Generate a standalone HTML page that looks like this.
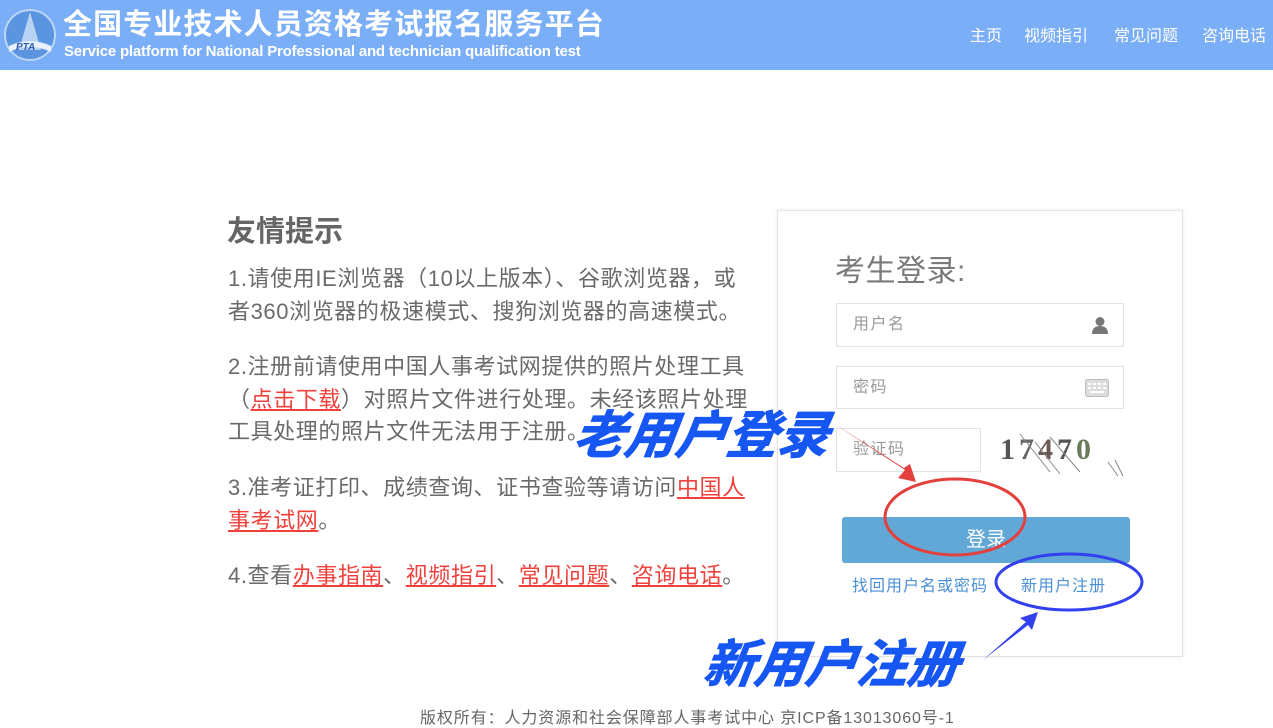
<!DOCTYPE html>
<html><head><meta charset="utf-8">
<style>
*{margin:0;padding:0;box-sizing:border-box}
body{width:1273px;height:727px;overflow:hidden;background:#fff;font-family:"Liberation Sans","Noto Sans CJK SC",sans-serif;position:relative}
.hd{position:absolute;left:0;top:0;width:1273px;height:70px;background:#7aaef6}
.t1{position:absolute;left:63px;top:1px;font-size:29px;font-weight:bold;color:#fff;letter-spacing:1.1px;white-space:nowrap}
.t2{position:absolute;left:64px;top:43px;font-size:15px;font-weight:bold;color:#fff;white-space:nowrap;letter-spacing:-0.2px}
.nav{position:absolute;top:22px;font-size:16px;color:#fff;white-space:nowrap}
.ab{position:absolute;white-space:nowrap}
.p{position:absolute;left:228px;font-size:22px;letter-spacing:0.6px;color:#6a6a6a;line-height:32.5px;white-space:nowrap}
.r{color:#f0413c;text-decoration:underline}
.box{position:absolute;left:777px;top:210px;width:406px;height:447px;border:1px solid #e4e4e4;box-shadow:0 0 4px rgba(0,0,0,0.08)}
.in{position:absolute;border:1px solid #e2e2e2;background:#fff;font-size:16px;letter-spacing:1.5px;color:#999;padding-left:16px}
.btn{position:absolute;left:842px;top:517px;width:288px;height:46px;background:#62a8d6;border-radius:3px;color:#fff;font-size:20px;text-align:center;line-height:46px}
.lk{position:absolute;top:572px;font-size:16px;letter-spacing:1px;color:#4b8fd6}
.big{position:absolute;font-size:51px;font-weight:bold;font-style:italic;color:#1656f2;white-space:nowrap;transform:skewX(-8deg);-webkit-text-stroke:1px #1656f2}
</style></head><body>
<div class="hd">
<svg style="position:absolute;left:3px;top:6px" width="54" height="56" viewBox="0 0 54 56">
<circle cx="27" cy="29" r="25" fill="#5b95e0" stroke="#bcd6f7" stroke-width="2"/>
<path d="M27 6 L16 44 L38 44 Z" fill="#cfe1f8" opacity="0.8"/>
<path d="M6 40 Q27 30 48 40 L48 46 Q27 36 6 46Z" fill="#e8f1fc"/>
<text x="13" y="44" font-size="10" font-weight="bold" font-style="italic" fill="#2d5fb0" font-family="Liberation Sans">PTA</text>
</svg>
<div class="t1">全国专业技术人员资格考试报名服务平台</div>
<div class="t2">Service platform for National Professional and technician qualification test</div>
<div class="nav" style="left:970px">主页</div>
<div class="nav" style="left:1024px">视频指引</div>
<div class="nav" style="left:1114px">常见问题</div>
<div class="nav" style="left:1202px">咨询电话</div>
</div>

<div class="ab" style="left:227px;top:208px;font-size:29px;font-weight:bold;color:#666">友情提示</div>
<div class="p" style="top:263px">1.请使用IE浏览器（10以上版本）、谷歌浏览器，或<br>者360浏览器的极速模式、搜狗浏览器的高速模式。</div>
<div class="p" style="top:351px">2.注册前请使用中国人事考试网提供的照片处理工具<br>（<span class="r">点击下载</span>）对照片文件进行处理。未经该照片处理<br>工具处理的照片文件无法用于注册。</div>
<div class="p" style="top:472px">3.准考证打印、成绩查询、证书查验等请访问<span class="r">中国人</span><br><span class="r">事考试网</span>。</div>
<div class="p" style="top:560px">4.查看<span class="r">办事指南</span>、<span class="r">视频指引</span>、<span class="r">常见问题</span>、<span class="r">咨询电话</span>。</div>

<div class="box"></div>
<div class="ab" style="left:835px;top:246px;font-size:30px;color:#7a7a7a;letter-spacing:0.5px">考生登录:</div>
<div class="in" style="left:836px;top:303px;width:288px;height:44px;line-height:42px">用户名
<svg style="position:absolute;right:14px;top:12px" width="18" height="18" viewBox="0 0 18 18"><circle cx="9" cy="5.5" r="4.5" fill="#777"/><path d="M1 18 Q1 10 9 10 Q17 10 17 18Z" fill="#777"/></svg></div>
<div class="in" style="left:836px;top:366px;width:288px;height:43px;line-height:41px">密码
<svg style="position:absolute;right:14px;top:12px" width="24" height="18" viewBox="0 0 24 18"><rect x="0.5" y="0.5" width="23" height="17" rx="2" fill="#ddd" stroke="#bbb"/><g fill="#fff"><rect x="3" y="4" width="3" height="2"/><rect x="8" y="4" width="3" height="2"/><rect x="13" y="4" width="3" height="2"/><rect x="18" y="4" width="3" height="2"/><rect x="3" y="8" width="3" height="2"/><rect x="8" y="8" width="3" height="2"/><rect x="13" y="8" width="3" height="2"/><rect x="18" y="8" width="3" height="2"/><rect x="5" y="12" width="14" height="2"/></g></svg></div>
<div class="in" style="left:836px;top:428px;width:145px;height:44px;line-height:42px">验证码</div>
<div class="ab" style="left:1000px;top:433px;font-size:30px;font-weight:bold;color:#555;font-family:'Liberation Serif',serif;letter-spacing:4px">1<span style="color:#666">7</span><span style="color:#6b5a55">4</span><span style="color:#555">7</span><span style="color:#6b7a5a">0</span></div>
<svg style="position:absolute;left:1000px;top:432px" width="125" height="45"><g stroke="#888" stroke-width="1" fill="none"><path d="M20 2 L50 40"/><path d="M35 10 L60 42"/><path d="M50 5 L80 40"/><path d="M108 30 L118 44"/><path d="M115 28 L123 44"/></g></svg>
<div class="btn">登录</div>
<div class="lk" style="left:852px">找回用户名或密码</div>
<div class="lk" style="left:1021px">新用户注册</div>

<svg style="position:absolute;left:0;top:0" width="1273" height="727">
<ellipse cx="955" cy="517" rx="70" ry="38" fill="none" stroke="#e3403d" stroke-width="3"/>
<ellipse cx="1069" cy="582" rx="73" ry="28" fill="none" stroke="#3340ee" stroke-width="3"/>
<path d="M833 423 L905 470 L898 478 L916 482 L910 464 L904 468 Z" fill="#e3403d"/>
<path d="M983 660 L1026 622 L1020 618 L1038 612 L1032 630 L1028 625 Z" fill="#3340ee"/>
</svg>
<div class="big" style="left:575px;top:394px">老用户登录</div>
<div class="big" style="left:705px;top:623px">新用户注册</div>

<div class="ab" style="left:420px;top:704px;font-size:16px;letter-spacing:0.9px;color:#666">版权所有：人力资源和社会保障部人事考试中心 京ICP备13013060号-1</div>
</body></html>
